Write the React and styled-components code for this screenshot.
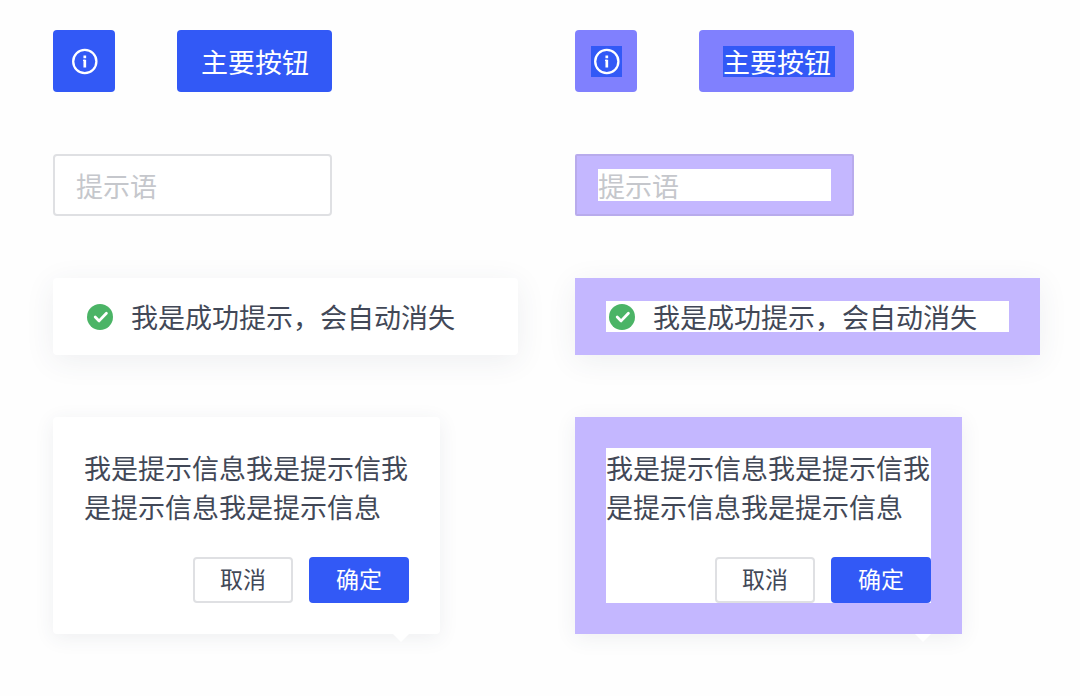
import React from "react";
import styled, { createGlobalStyle, css } from "styled-components";

const colors = {
  primary: "#3259f6",
  primaryPadding: "#8080fe",
  padding: "#c4b7ff",
  paddingBorder: "#b8abec",
  surface: "#fff",
  text: "#424857",
  placeholder: "#c5c7cc",
  border: "#dfe0e3",
  success: "#4bb466",
};

const InfoIcon = () => (
  <svg viewBox="0 0 31 31" fill="none" stroke="#fff" aria-hidden="true">
    <circle cx="15.8" cy="15.5" r="11.6" strokeWidth="2.3" />
    <path d="M15.8 9.6v2.6M15.8 13.8v7.6" strokeWidth="2.7" />
    <path d="M14 14.4h2" strokeWidth="1.2" />
  </svg>
);

const SuccessIcon = () => (
  <svg viewBox="0 0 31 31" fill="none" aria-hidden="true">
    <circle cx="16" cy="16" r="13" fill={colors.success} />
    <path
      d="M11.2 16l3.9 3.9 7.3-7.6"
      stroke="#fff"
      strokeWidth="2.8"
      strokeLinecap="round"
      strokeLinejoin="round"
    />
  </svg>
);

const Examples = ({ name, inspect }) => (
  <Column aria-label={name}>
    <ButtonRow>
      <IconButton type="button" aria-label="信息" $inspect={inspect}>
        <InfoIcon />
      </IconButton>
      <MainButton type="button" $inspect={inspect}>主要按钮</MainButton>
    </ButtonRow>

    <TextInput type="text" placeholder="提示语" aria-label="提示语" $inspect={inspect} />

    <Message role="status" $inspect={inspect}>
      <SuccessIcon />
      <span>我是成功提示，会自动消失</span>
    </Message>

    <Popover $inspect={inspect}>
      <p>我是提示信息我是提示信我是提示信息我是提示信息</p>
      <Actions>
        <SmallButton type="button">取消</SmallButton>
        <SmallButton type="button" $primary>确定</SmallButton>
      </Actions>
    </Popover>
  </Column>
);

const App = () => {
  return (
    <>
      <GlobalStyle />
      <Wrapper lang="zh-CN">
        <Examples name="组件" />
        <Examples name="组件内边距" inspect />
      </Wrapper>
    </>
  );
};

const GlobalStyle = createGlobalStyle`
  * {
    box-sizing: border-box;
  }
  body {
    margin: 0;
    background: #fefefe;
    color: ${colors.text};
  }
  body, button, input {
    font-family: "Noto Sans CJK SC", sans-serif;
    font-size: 27px;
  }
  p {
    margin: 0;
  }
`;

// paints the padding box in one colour and the content box in another
const paddingView = (content, padding) => css`
  background:
    linear-gradient(${content}, ${content}) content-box,
    ${padding};
`;

const Wrapper = styled.main`
  display: grid;
  grid-template-columns: 1fr 1fr;
  gap: 57px;
  padding: 30px 40px 54px 53px;
`;

const Column = styled.section`
  display: flex;
  flex-direction: column;
  gap: 62px;
`;

const ButtonRow = styled.div`
  display: flex;
  gap: 62px;
`;

const BaseButton = styled.button`
  border: none;
  border-radius: 4px;
  background: ${colors.primary};
  color: #fff;
  line-height: 31px;
  cursor: pointer;
  ${({ $inspect }) => $inspect && paddingView(colors.primary, colors.primaryPadding)}
`;

const IconButton = styled(BaseButton)`
  padding: 16px 15px 15px 16px;
  svg {
    display: block;
    width: 31px;
    height: 31px;
  }
`;

const MainButton = styled(BaseButton)`
  width: 155px;
  padding: 16px 19px 15px 24px;
  text-align: left;
`;

const TextInput = styled.input`
  width: 100%;
  max-width: 279px;
  height: 62px;
  padding: 13px 21px;
  border: 2px solid ${colors.border};
  border-radius: 4px;
  outline: none;
  background: ${colors.surface};
  color: ${colors.text};
  &::placeholder {
    color: ${colors.placeholder};
  }
  ${({ $inspect }) => $inspect && css`
    border-color: ${colors.paddingBorder};
    border-radius: 2px;
    ${paddingView(colors.surface, colors.padding)}
  `}
`;

const surface = css`
  border-radius: 4px;
  background: ${colors.surface};
  ${({ $inspect }) => $inspect && css`
    border-radius: 0;
    ${paddingView(colors.surface, colors.padding)}
  `}
`;

const Message = styled.div`
  display: flex;
  align-items: center;
  gap: 16px;
  padding: 23px 31px;
  line-height: 31px;
  box-shadow: 0 6px 30px rgba(50, 60, 90, 0.08);
  ${surface}
  svg {
    flex: none;
    width: 31px;
    height: 31px;
  }
`;

const Popover = styled.div`
  position: relative;
  max-width: 387px;
  padding: 31px;
  line-height: 39px;
  box-shadow: 0 4px 20px rgba(50, 60, 90, 0.08);
  ${surface}
  &::after {
    content: "";
    position: absolute;
    top: 100%;
    right: 31px;
    border: 8px solid transparent;
    border-bottom: none;
    border-top-color: ${colors.surface};
  }
`;

const Actions = styled.div`
  display: flex;
  justify-content: flex-end;
  gap: 16px;
  margin-top: 31px;
`;

const SmallButton = styled.button`
  width: 100px;
  height: 46px;
  padding: 0 0 3px;
  border: 2px solid ${({ $primary }) => ($primary ? colors.primary : colors.border)};
  border-radius: 4px;
  background: ${({ $primary }) => ($primary ? colors.primary : colors.surface)};
  color: ${({ $primary }) => ($primary ? "#fff" : colors.text)};
  font-size: 23px;
  line-height: 31px;
  cursor: pointer;
`;

export default App;
